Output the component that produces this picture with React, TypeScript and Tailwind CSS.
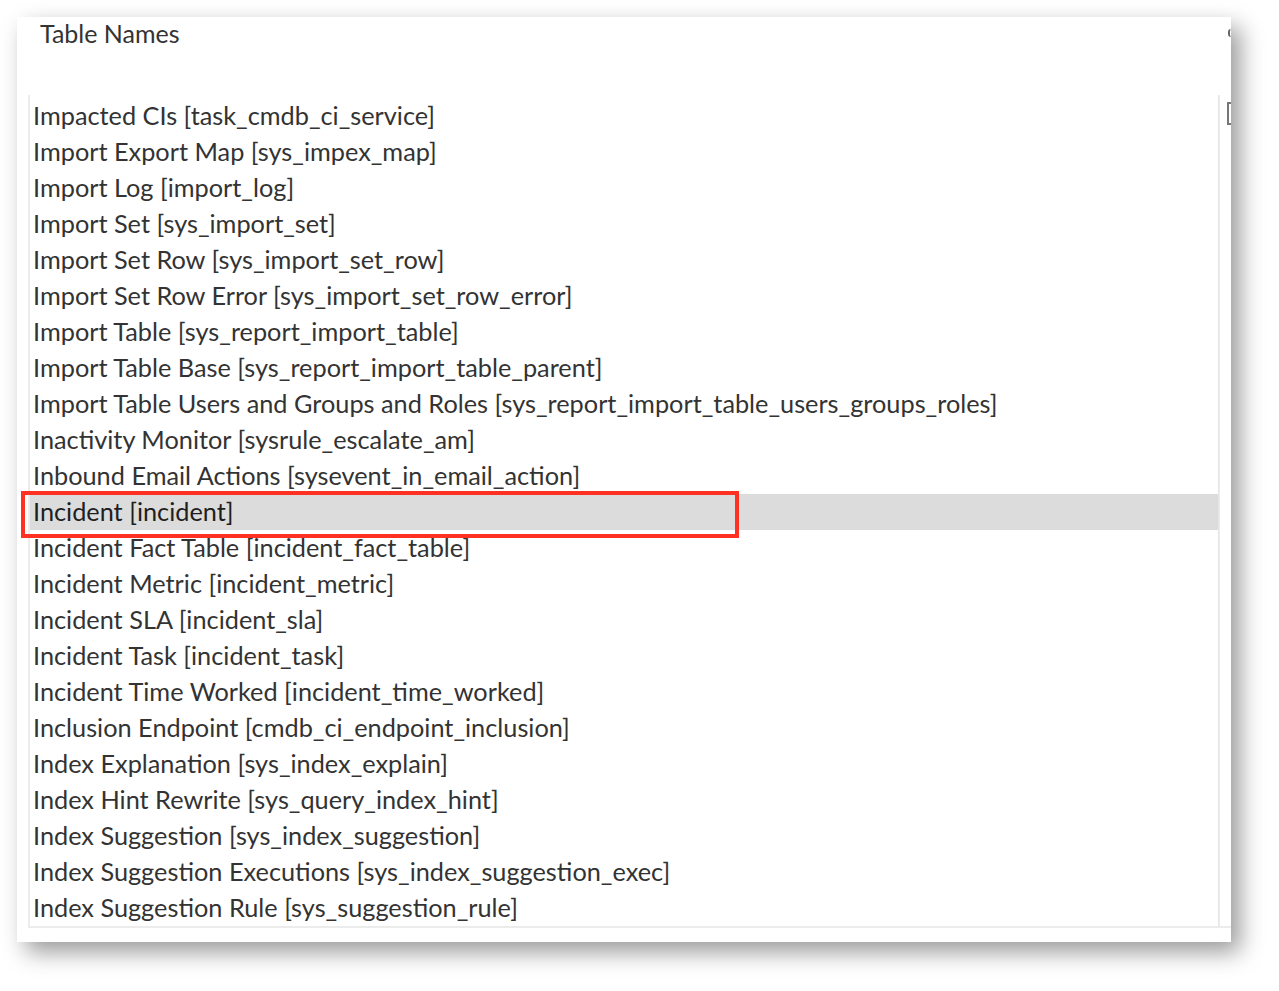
import React from "react";

const rows = [
  "Impacted CIs [task_cmdb_ci_service]",
  "Import Export Map [sys_impex_map]",
  "Import Log [import_log]",
  "Import Set [sys_import_set]",
  "Import Set Row [sys_import_set_row]",
  "Import Set Row Error [sys_import_set_row_error]",
  "Import Table [sys_report_import_table]",
  "Import Table Base [sys_report_import_table_parent]",
  "Import Table Users and Groups and Roles [sys_report_import_table_users_groups_roles]",
  "Inactivity Monitor [sysrule_escalate_am]",
  "Inbound Email Actions [sysevent_in_email_action]",
  "Incident [incident]",
  "Incident Fact Table [incident_fact_table]",
  "Incident Metric [incident_metric]",
  "Incident SLA [incident_sla]",
  "Incident Task [incident_task]",
  "Incident Time Worked [incident_time_worked]",
  "Inclusion Endpoint [cmdb_ci_endpoint_inclusion]",
  "Index Explanation [sys_index_explain]",
  "Index Hint Rewrite [sys_query_index_hint]",
  "Index Suggestion [sys_index_suggestion]",
  "Index Suggestion Executions [sys_index_suggestion_exec]",
  "Index Suggestion Rule [sys_suggestion_rule]",
];

export default function App() {
  return (
    <div
      className="w-[1279px] h-[991px] bg-white overflow-hidden pt-[17px] pl-[17px]"
      style={{ fontFamily: "Lato, 'Liberation Sans', sans-serif" }}
    >
      <div className="w-[1214px] h-[925px] bg-white overflow-hidden shadow-[9px_10px_22px_rgba(0,0,0,0.4)]">
        <div className="h-[78px] flex items-start justify-between">
          <div className="pl-[23px] pt-0 text-[25px] leading-[32px] text-[#333]">Table Names</div>
          <div className="mt-[12px] w-[3px] h-[8px] rounded-l-full border-l-2 border-[#666]" />
        </div>
        <div className="ml-[11px] flex border-l-2 border-b-2 border-[#ececec]">
          <div className="flex-1 flex flex-col border-r border-[#e6e6e6] pt-[3px]">
            {rows.map((r, i) =>
              i === 11 ? (
                <div key={r} className="relative h-[36px] pl-[3px] flex items-center whitespace-nowrap text-[25.3px] bg-[#dcdcdc] text-[#1f1f1f]">
                  {r}
                  <div className="absolute left-[-9px] top-[-3px] w-[718px] h-[47px] border-4 border-[#ff3123]" />
                </div>
              ) : (
                <div key={r} className="h-[36px] pl-[3px] flex items-center whitespace-nowrap text-[25.3px] text-[#333]">
                  {r}
                </div>
              )
            )}
          </div>
          <div className="w-[12px] border-l border-[#ececec] flex justify-end pt-[7px]">
            <div className="w-[4px] h-[23px] border-l-2 border-t-2 border-b-2 border-[#777]" />
          </div>
        </div>
      </div>
    </div>
  );
}
